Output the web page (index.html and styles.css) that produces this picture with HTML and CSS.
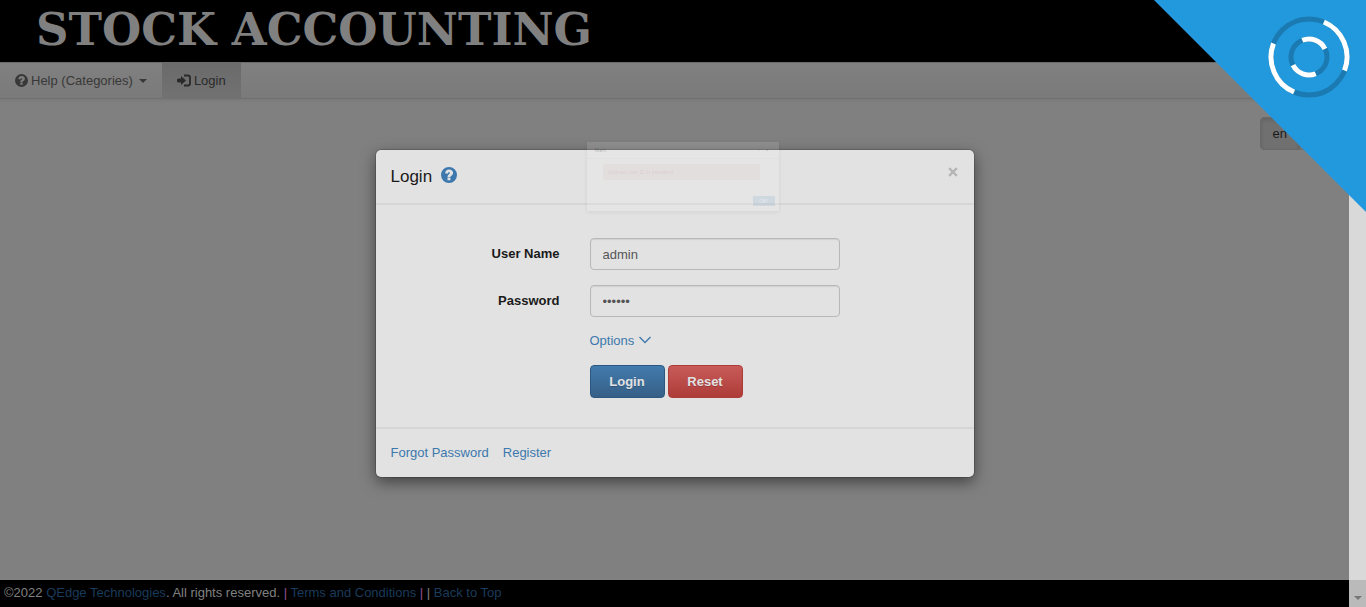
FILE: index.html
```
<!DOCTYPE html>
<html lang="en">
<head>
<meta charset="utf-8">
<title>Login - Stock Accounting</title>
<link rel="stylesheet" href="styles.css">
</head>
<body>
<svg class="defs" aria-hidden="true">
  <symbol id="question" viewBox="0 0 16 16">
    <path fill-rule="evenodd" fill="currentColor" d="M8 0a8 8 0 1 0 0 16A8 8 0 0 0 8 0zM6.500 10.800h2.900v2.500H6.500zM4.200 6.400C4.200 4 5.800 2.600 8.100 2.600c2.400 0 4 1.300 4 3.200 0 1.500-.8 2.300-1.700 2.900-.7.500-1 .7-1 1.500H6.500c0-1.700.6-2.300 1.500-3 .6-.5.900-.7.900-1.200 0-.5-.3-.8-.9-.8-.7 0-1 .4-1 1.200z"/>
  </symbol>
</svg>
<div class="page">
  <div class="site">
    <header class="brand"><h1 class="brand-name">STOCK ACCOUNTING</h1></header>
    <nav class="navbar">
      <a class="nav-link" href="#help"><svg class="nav-icon"><use href="#question"/></svg>Help (Categories)<span class="caret"></span></a>
      <a class="nav-link active" href="#login"><svg class="nav-icon signin" viewBox="0 0 14 14"><path fill="currentColor" d="M0 5.500L1 4.500H4V2l5 4.500L4 11V8.500H1L0 7.500z"/><path fill="none" stroke="currentColor" stroke-width="1.800" d="M7 1.500h4q2 0 2 2v6q0 2-2 2H7"/></svg>Login</a>
    </nav>
    <main class="content">
      <div class="languages">
        <button class="lang active" type="button">en</button><button class="lang" type="button" aria-label="Choose language"><span class="caret"></span></button>
      </div>
    </main>
    <footer class="footer">©2022 <a href="#company">QEdge Technologies</a>. All rights reserved. <span class="bar">|</span> <a href="#terms">Terms and Conditions</a> <span class="bar">|</span> | <a href="#top">Back to Top</a></footer>
    <section class="modal" aria-labelledby="login-title">
      <header class="modal-header">
        <h2 class="modal-title" id="login-title">Login</h2>
        <a class="help" href="#help" aria-label="Help"><svg class="help-icon"><use href="#question"/></svg></a>
        <button class="close" type="button" aria-label="Close"><svg class="close-icon" viewBox="0 0 10 10"><path d="M2 2l6 6M8 2L2 8" fill="none" stroke="currentColor" stroke-width="2.400" stroke-linecap="square"/></svg></button>
      </header>
      <form class="login-form">
        <label class="label" for="username">User Name</label>
        <input class="field" id="username" type="text" value="admin">
        <label class="label" for="password">Password</label>
        <input class="field" id="password" type="password" value="master">
        <a class="options" href="#options">Options<svg class="chevron" viewBox="0 0 14 14"><path d="M1.500 3L7 8.500 12.500 3" fill="none" stroke="currentColor" stroke-width="1.300"/></svg></a>
        <div class="actions">
          <button class="button primary" type="button">Login</button>
          <button class="button danger" type="reset">Reset</button>
        </div>
      </form>
      <footer class="modal-footer"><a href="#forgot">Forgot Password</a><a href="#register">Register</a></footer>
    </section>
    <div class="alert">
      <div class="alert-head"><span class="alert-title">Alert</span><span class="alert-tools"><span>▫</span><span>×</span></span></div>
      <div class="alert-message">Incorrect user ID or password</div>
      <button class="alert-ok" type="button">OK!</button>
    </div>
  </div>
  <div class="scrollbar"><div class="scroll-down"><svg class="scroll-arrow" viewBox="0 0 8 4"><path fill="#777" d="M0 0h8L4 4z"/></svg></div></div>
</div>
<div class="corner">
  <svg class="spinner" viewBox="0 0 82 82">
    <g fill="none" stroke-width="5">
      <circle cx="41" cy="41" r="38" stroke="#1b7ab1"/>
      <circle cx="41" cy="41" r="18" stroke="#1b7ab1"/>
      <path stroke="#fff" d="M55.900 6A38 38 0 0 1 76.500 54.500M26.100 76A38 38 0 0 1 5.500 27.500M34.300 24.300A18 18 0 0 1 57 32.800M47.700 57.700A18 18 0 0 1 25 49.200"/>
    </g>
  </svg>
</div>
</body>
</html>
```
FILE: styles.css
```
* { box-sizing: border-box; }

body {
  margin: 0;
  background: #808080;
  color: #1a1a1a;
  font: 13px/18px "Liberation Sans", Arial, sans-serif;
}

a { color: #3c78ad; text-decoration: none; }
button, input { font: inherit; }
.defs { position: absolute; width: 0; height: 0; }

.page { display: flex; min-height: 100vh; }
.site { position: relative; flex: 1; display: flex; flex-direction: column; }

.brand { background: #000; height: 62px; padding: 4px 36px; }
.brand-name {
  margin: 0;
  color: #808080;
  font: bold 45px/52px "DejaVu Serif", serif;
  white-space: nowrap;
}

.navbar {
  display: flex;
  height: 37px;
  border-top: 1px solid #6c6c6c;
  border-bottom: 1px solid #707070;
  background: linear-gradient(#808080, #7a7a7a);
  box-shadow: 0 1px 3px rgba(0, 0, 0, 0.08);
}
.nav-link { display: flex; align-items: center; padding: 0 15px; color: #383838; }
.nav-link.active { background: linear-gradient(#6a6a6a, #727272); color: #2a2a2a; }
.nav-icon { width: 13px; height: 13px; margin-right: 3px; }
.nav-icon.signin { width: 14px; height: 14px; }
.caret {
  margin-left: 6px;
  border: 4px solid transparent;
  border-top-color: currentColor;
  border-bottom: 0;
}

.content { flex: 1; padding: 18px 15px; }
.languages { display: flex; justify-content: flex-end; }
.lang {
  height: 33px;
  padding: 0 12px;
  border: 1px solid #707070;
  border-radius: 0 4px 4px 0;
  background: #777;
  color: #1a1a1a;
}
.lang.active {
  border-color: #696969;
  border-radius: 4px 0 0 4px;
  background: #707070;
  box-shadow: inset 0 2px 4px rgba(0, 0, 0, 0.12);
}
.lang .caret { display: block; margin: 0; }

.footer { background: #000; color: #808080; padding: 4px 4px 5px; }
.footer a { color: #1a3b5b; }
.bar { color: #905090; }

.modal {
  position: absolute;
  top: 150px;
  left: 0;
  right: 0;
  width: 598px;
  margin: 0 auto;
  border-radius: 5px;
  background: #e2e2e2;
  box-shadow: 0 0 0 1px rgba(0, 0, 0, 0.15), 0 5px 15px rgba(0, 0, 0, 0.5);
}
.modal-header {
  display: flex;
  align-items: center;
  height: 55px;
  padding: 0 15px;
  border-bottom: 2px solid #d6d6d6;
}
.modal-title { margin: 0; font-size: 17px; font-weight: normal; }
.help { display: flex; margin-left: 9px; padding-bottom: 3px; }
.help-icon { width: 16px; height: 16px; }
.close { margin-left: auto; padding: 0 1px 9px 0; border: 0; background: none; color: #b5b5b5; }
.close-icon { display: block; width: 10px; height: 10px; }

.login-form {
  display: grid;
  grid-template-columns: 184px 250px;
  column-gap: 30px;
  row-gap: 15px;
  align-items: center;
  padding: 33px 0 29px;
}
.label { text-align: right; font-weight: bold; }
.field {
  height: 32px;
  padding: 0 12px;
  border: 1px solid #b8b8b8;
  border-radius: 4px;
  background: #e2e2e2;
  box-shadow: inset 0 1px 1px rgba(0, 0, 0, 0.08);
  color: #555;
}
.options { grid-column: 2; display: flex; align-items: center; }
.chevron { width: 14px; height: 14px; margin-left: 4px; }
.actions { grid-column: 2; display: flex; gap: 3px; }
.button {
  width: 75px;
  height: 33px;
  padding: 0;
  border: 1px solid #2b5780;
  border-radius: 4px;
  color: #e2e2e2;
  font-weight: bold;
  text-shadow: 0 1px 0 rgba(0, 0, 0, 0.2);
}
.primary { background: linear-gradient(#427bae, #365f86); }
.danger { border-color: #ad3c39; background: linear-gradient(#c75b58, #ae3c39); }

.modal-footer {
  display: flex;
  gap: 14px;
  padding: 15px;
  border-top: 2px solid #d6d6d6;
}

.alert {
  position: absolute;
  top: 142px;
  left: 16px;
  right: 0;
  width: 192px;
  height: 69px;
  margin: 0 auto;
  background: rgba(255, 255, 255, 0.12);
  box-shadow: 0 1px 4px rgba(0, 0, 0, 0.07);
  font-size: 5px;
  line-height: 6px;
}
.alert-head { display: flex; justify-content: space-between; height: 17px; padding: 5px 10px 0 8px; border-bottom: 1px solid rgba(0, 0, 0, 0.02); color: rgba(0, 0, 0, 0.2); }
.alert-title { font-weight: bold; }
.alert-tools { display: flex; gap: 6px; }
.alert-message { height: 16px; margin: 5px 19px 0 16px; padding: 5px; background: rgba(205, 120, 120, 0.06); color: rgba(150, 80, 80, 0.16); }
.alert-ok { display: block; width: 22px; height: 10px; margin: 16px 4px 0 auto; padding: 0; border: 0; background: rgba(51, 122, 183, 0.12); color: rgba(255, 255, 255, 0.5); }

.scrollbar { display: flex; align-items: flex-end; width: 17px; background: #d9d9d9; }
.scroll-down { display: flex; align-items: center; justify-content: center; width: 17px; height: 27px; padding-top: 9px; background: #bababa; }
.scroll-arrow { width: 8px; height: 4px; }

.corner {
  position: fixed;
  top: 0;
  right: 0;
  width: 212px;
  height: 212px;
  padding: 16px 16px 0 0;
  background: #2299dd;
  clip-path: polygon(0 0, 100% 0, 100% 100%);
}
.spinner { display: block; width: 82px; height: 82px; margin-left: auto; }
```
